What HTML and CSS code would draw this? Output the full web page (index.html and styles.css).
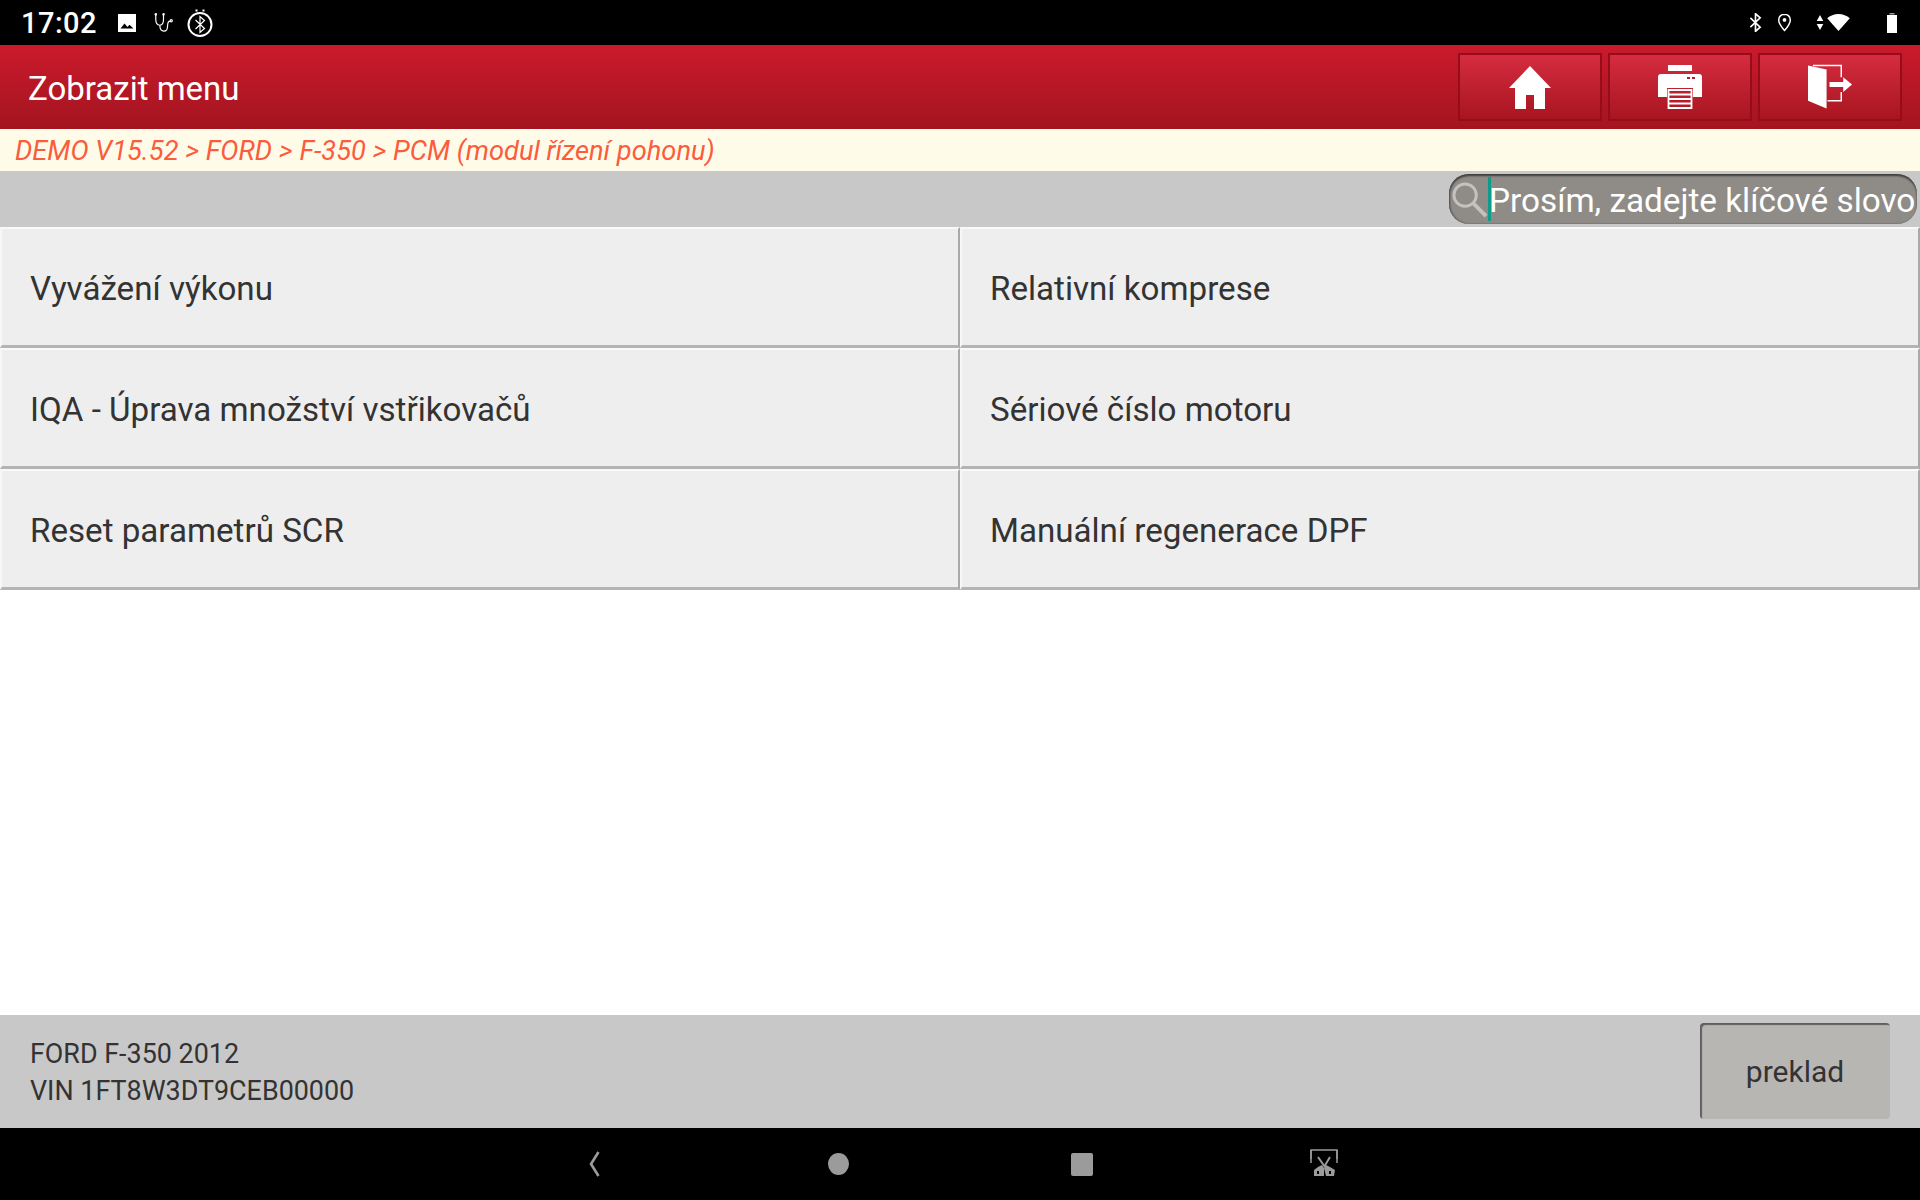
FILE: index.html
```html
<html>

<head>
  <meta charset="utf-8">
  <link rel="stylesheet" href="styles.css">
</head>

<body>
  <div class="statusbar">
    <div class="status-left">
      <span class="clock">17:02</span>
      <svg class="ico-image" viewBox="0 0 20 20"><path d="M1 1h18v18H1z" fill="#fff"/><path d="M3.500 15.500l4-5 3 3.400 2-2.200 4 3.800z" fill="#000"/></svg>
      <svg class="ico-scope" viewBox="0 0 22 22" fill="none" stroke="#fff" stroke-width="1.300"><path d="M2.500 2v5c0 4 2 6.500 4.500 6.500S11 11 11 7V2"/><path d="M7 13.500c0 4 1.500 6.500 4.500 6.500 3.500 0 4-3 4-6 0-3 1-5 3-5"/><circle cx="19.500" cy="8.500" r="1.200"/><circle cx="2.500" cy="1.500" r=".8"/><circle cx="11" cy="1.500" r=".8"/></svg>
      <svg class="ico-bt-clock" viewBox="0 0 28 28" fill="none" stroke="#fff"><circle cx="14" cy="15.500" r="11.500" stroke-width="2"/><path d="M9.500 1.500h2M16.500 1.500h2" stroke-width="2"/><path d="M9.500 11l9 8.500-4.500 4v-16l4.500 4-9 8.500" stroke-width="1.200"/></svg>
    </div>
    <div class="status-right">
      <svg class="ico-bt" viewBox="0 0 14 20" fill="none" stroke="#fff" stroke-width="1.800"><path d="M1.500 5l10.500 10-5 4.500V.5l5 4.500L1.500 15"/></svg>
      <svg class="ico-pin" viewBox="0 0 16 20"><path d="M8 1.200c-3.500 0-6.200 2.700-6.200 6C1.800 11.500 8 18.500 8 18.500s6.200-7 6.200-11.300c0-3.300-2.700-6-6.200-6z" fill="none" stroke="#fff" stroke-width="1.600"/><circle cx="8" cy="7.300" r="2" fill="#fff"/></svg>
      <svg class="ico-updown" viewBox="0 0 8 16" fill="#fff"><path d="M4 0l3.500 6.500h-7zM4 16L.5 9.500h7z"/></svg>
      <svg class="ico-wifi" viewBox="0 0 24 18" fill="#fff"><path d="M12 18L0 4.500C3.200 1.800 7.400 0 12 0s8.800 1.800 12 4.500z"/></svg>
      <svg class="ico-battery" viewBox="0 0 12 20" fill="#fff"><path d="M3.500 0h5v1.500H3.500z" opacity=".6"/><path d="M1 2h10v18H1z"/></svg>
    </div>
  </div>

  <div class="topbar">
    <div class="title">Zobrazit menu</div>
    <div class="actions">
      <div class="action">
        <svg class="ico-home" viewBox="0 0 42 44" fill="#fff"><path d="M21 1L0 23h6v21h11V30h8v14h11V23h6z"/></svg>
      </div>
      <div class="action">
        <svg class="ico-print" viewBox="0 0 44 44"><path d="M10 0h24v6H10z" fill="#fff"/><path d="M3 9h38a3 3 0 0 1 3 3v20H35V23H9v9H0V12a3 3 0 0 1 3-3z" fill="#fff"/><path d="M29 12h3v2h-3zM34 12h3v2h-3z" fill="#b01c2c"/><path d="M10.500 25h23v18h-23zM10.500 29.500h23M10.500 34h23M10.500 38.500h23" fill="none" stroke="#fff" stroke-width="1.800"/></svg>
      </div>
      <div class="action">
        <svg class="ico-exit" viewBox="0 0 46 46"><path d="M0 1l19 4v40L0 37z" fill="#fff"/><path d="M5 1h29v12M34 28v9H20" fill="none" stroke="#fff" stroke-width="1.500"/><path d="M22 18h14v-5l9 7.500-9 7.500v-5H22z" fill="#fff"/></svg>
      </div>
    </div>
  </div>

  <div class="crumb">DEMO V15.52 &gt; FORD &gt; F-350 &gt; PCM (modul řízení pohonu)</div>

  <div class="searchbar">
    <div class="search">
      <svg class="ico-search" viewBox="0 0 38 38" fill="none" stroke="#c4c2be"><circle cx="14.500" cy="14.500" r="11.500" stroke-width="3"/><path d="M23 23l13 13" stroke-width="4"/></svg>
      <span class="caret"></span>
      <span class="placeholder">Prosím, zadejte klíčové slovo</span>
    </div>
  </div>

  <div class="menu">
    <div class="cell">Vyvážení výkonu</div>
    <div class="cell">Relativní komprese</div>
    <div class="cell">IQA - Úprava množství vstřikovačů</div>
    <div class="cell">Sériové číslo motoru</div>
    <div class="cell">Reset parametrů SCR</div>
    <div class="cell">Manuální regenerace DPF</div>
  </div>

  <div class="footer">
    <div class="vehicle">
      <div>FORD F-350 2012</div>
      <div>VIN 1FT8W3DT9CEB00000</div>
    </div>
    <div class="btn-translate">preklad</div>
  </div>

  <div class="navbar">
    <svg class="ico-back" viewBox="0 0 12 26" fill="none" stroke="#9b9b9b" stroke-width="2.600"><path d="M9.500 1L2 13l7.500 12"/></svg>
    <span class="nav-home"></span>
    <span class="nav-recent"></span>
    <svg class="ico-shot" viewBox="0 0 28 28"><path d="M1 10V1h26v9" fill="none" stroke="#9b9b9b" stroke-width="1.500"/><path d="M1 1v13M27 1v13" stroke="#9b9b9b" stroke-width="1.500"/><path d="M8 8l7 10M20 8l-6 10" stroke="#9b9b9b" stroke-width="2"/><path d="M8 18l4-2 2 3v8H4v-6zM20 18l-4-2-2 3 2 8h8l1-6z" fill="#9b9b9b"/><path d="M7 22h2v3H7zM19 22h2v3h-2z" fill="#000"/></svg>
  </div>
</body>

</html>
```

FILE: styles.css
```css
html,
body {
  margin: 0;
  padding: 0;
}

body {
  display: flex;
  flex-direction: column;
  height: 1200px;
  overflow: hidden;
  background-color: #fff;
  color: #333;
  font-family: Roboto, "Liberation Sans", sans-serif;
}

svg {
  display: block;
  flex: none;
}

.statusbar {
  display: flex;
  align-items: center;
  justify-content: space-between;
  height: 45px;
  padding: 0 22px 0 21px;
  background-color: #000;
  color: #fff;
}

.status-left,
.status-right {
  display: flex;
  align-items: center;
}

.clock {
  font-size: 29px;
  font-weight: 500;
  letter-spacing: 0.5px;
}

.ico-image {
  width: 20px;
  height: 20px;
  margin-left: 20px;
}

.ico-scope {
  width: 21px;
  height: 20px;
  margin-left: 16px;
}

.ico-bt-clock {
  width: 28px;
  height: 28px;
  margin-left: 12px;
}

.ico-bt {
  width: 13px;
  height: 19px;
}

.ico-pin {
  width: 15px;
  height: 19px;
  margin-left: 15px;
}

.ico-updown {
  width: 8px;
  height: 15px;
  margin-left: 24px;
}

.ico-wifi {
  width: 23px;
  height: 17px;
  margin-left: 3px;
}

.ico-battery {
  width: 12px;
  height: 20px;
  margin-left: 36px;
}

.topbar {
  display: flex;
  align-items: center;
  justify-content: space-between;
  height: 84px;
  padding: 0 18px 0 28px;
  background-image: linear-gradient(#cb1a2c, #a3141f);
  color: #fff;
}

.title {
  font-size: 33px;
  padding-top: 2px;
}

.actions {
  display: flex;
  gap: 6px;
}

.action {
  display: flex;
  align-items: center;
  justify-content: center;
  box-sizing: border-box;
  width: 144px;
  height: 68px;
  border: 2px solid #960d1a;
  background-image: linear-gradient(#d52c40, #a8151f);
}

.ico-home {
  width: 42px;
  height: 44px;
}

.ico-print {
  width: 44px;
  height: 44px;
}

.ico-exit {
  width: 45px;
  height: 46px;
}

.crumb {
  height: 42px;
  padding-left: 15px;
  background-color: #fffbe9;
  color: #fb5c3c;
  font-size: 27.25px;
  font-style: italic;
  line-height: 45px;
}

.searchbar {
  display: flex;
  justify-content: flex-end;
  align-items: center;
  height: 56px;
  padding-right: 3px;
  background-color: #c8c8c8;
}

.search {
  display: flex;
  align-items: center;
  box-sizing: border-box;
  width: 468px;
  height: 50px;
  padding-left: 2px;
  overflow: hidden;
  border-radius: 20px;
  background-color: #8f8c88;
  box-shadow: inset 0 2px 2px #3f3f3f, inset 1px 0 2px #555;
  color: #fff;
  font-size: 33.3px;
  line-height: 50px;
  white-space: nowrap;
}

.ico-search {
  width: 37px;
  height: 37px;
}

.caret {
  flex: none;
  width: 3px;
  height: 44px;
  background-color: #0d9c8c;
}

.placeholder {
  margin-left: -2px;
  padding-top: 4px;
}

.menu {
  display: grid;
  grid-template-columns: 960px 960px;
  grid-auto-rows: 121px;
  flex: 1;
  align-content: start;
}

.cell {
  display: flex;
  align-items: center;
  box-sizing: border-box;
  padding: 3px 0 0 28px;
  background-color: #eee;
  border-top: 2px solid #f9f9f9;
  border-left: 2px solid #f7f7f7;
  border-right: 2px solid #a9a9a9;
  border-bottom: 3px solid #b4b4b4;
  font-size: 33.15px;
}

.footer {
  display: flex;
  align-items: center;
  justify-content: space-between;
  height: 113px;
  padding: 0 30px;
  background-color: #c8c8c8;
  font-size: 26.9px;
  line-height: 37px;
}

.vehicle {
  padding-top: 2px;
}

.btn-translate {
  display: flex;
  align-items: center;
  justify-content: center;
  box-sizing: border-box;
  width: 190px;
  height: 96px;
  margin-bottom: 1px;
  border-radius: 4px;
  background-color: #b8b6b3;
  box-shadow: inset 2px 2px 1px #5f5f5f;
  font-size: 30px;
}

.navbar {
  position: relative;
  height: 72px;
  background-color: #000;
}

.ico-back {
  position: absolute;
  left: 589px;
  top: 23px;
  width: 12px;
  height: 26px;
}

.nav-home {
  position: absolute;
  left: 828px;
  top: 25px;
  width: 21px;
  height: 22px;
  border-radius: 50%;
  background-color: #9b9b9b;
}

.nav-recent {
  position: absolute;
  left: 1071px;
  top: 25px;
  width: 22px;
  height: 23px;
  border-radius: 2px;
  background-color: #9b9b9b;
}

.ico-shot {
  position: absolute;
  left: 1310px;
  top: 21px;
  width: 28px;
  height: 28px;
}
```
